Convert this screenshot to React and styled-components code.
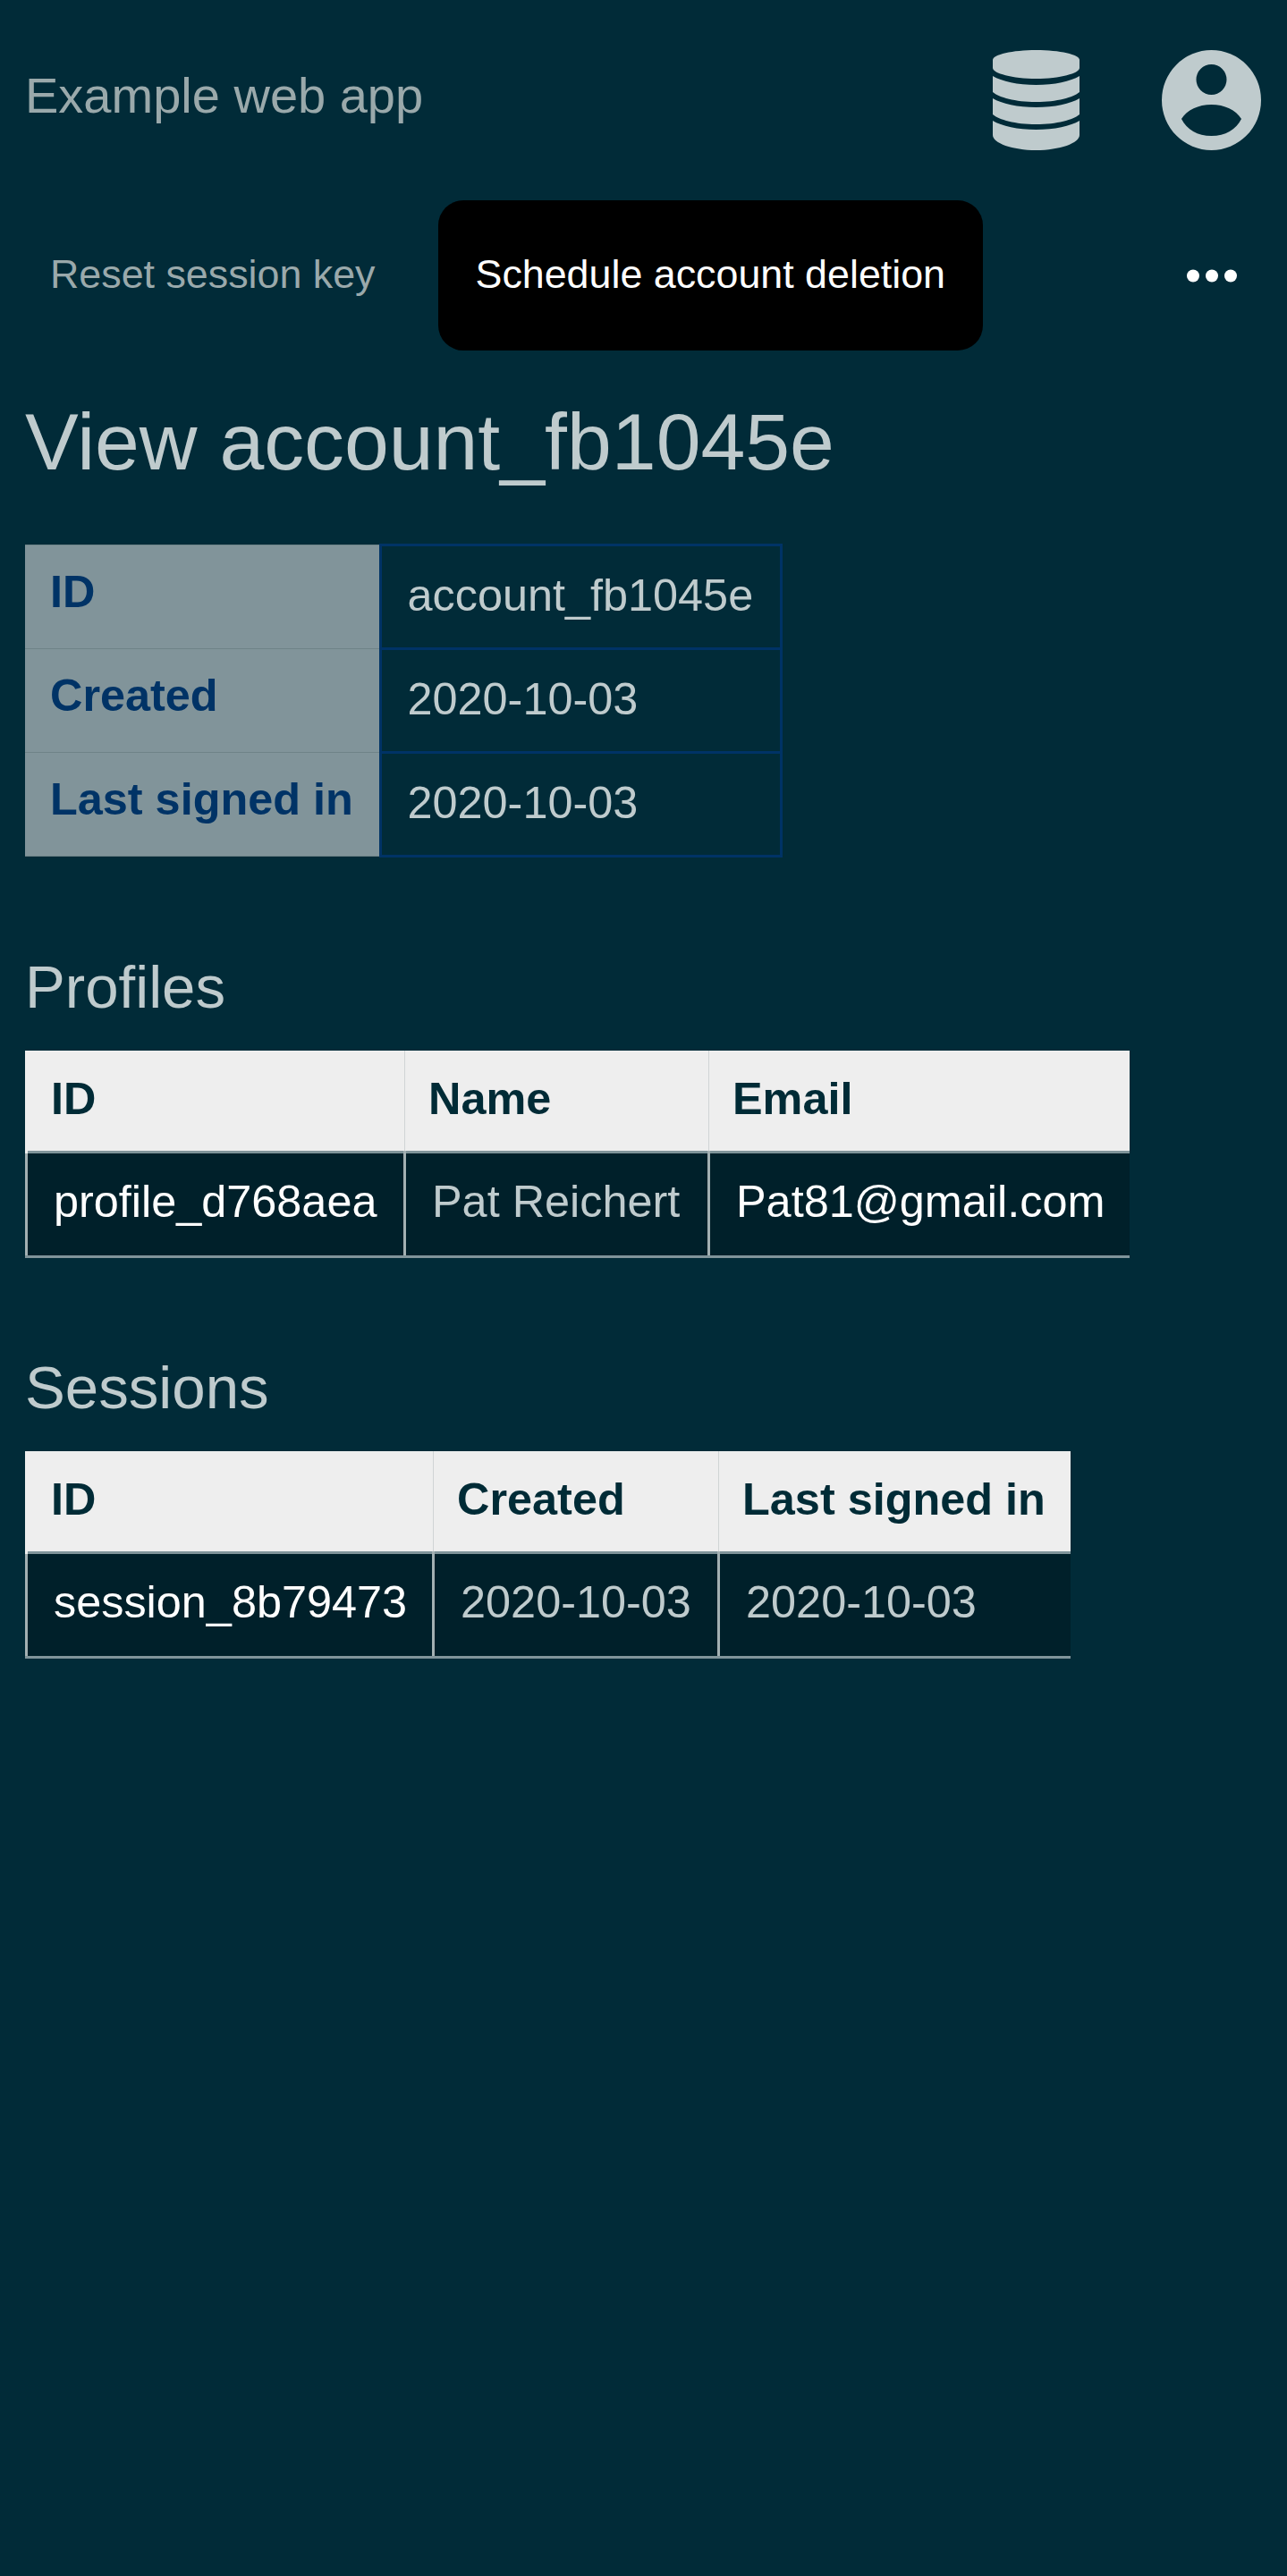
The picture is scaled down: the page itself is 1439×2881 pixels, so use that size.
import React from 'react';
import styled, { createGlobalStyle } from 'styled-components';

const GlobalStyle = createGlobalStyle`
  html, body {
    margin: 0;
    background: #012b38;
  }
  body {
    min-height: 2881px;
    font-family: 'Liberation Sans', Arial, sans-serif;
    font-size: 50.4px;
    line-height: 57px;
    color: #bfcbcd;
  }
`;

function DatabaseIcon() {
  return (
    <svg width="97" height="112" viewBox="0 0 97 112" fill="#bfcbcd">
      <path d="M0 11C0 5 22 0 48.5 0S97 5 97 11V20C97 26 75 32 48.5 32S0 26 0 20Z" />
      <path d="M0 29C10 35 28 39 48.5 39S87 35 97 29V47C90 53 72 58 48.5 58S7 53 0 47Z" />
      <path d="M0 54C10 60 28 64 48.5 64S87 60 97 54V72C90 78 72 83 48.5 83S7 78 0 72Z" />
      <path d="M0 79C10 85 28 89 48.5 89S87 85 97 79V95C97 104 75 112 48.5 112S0 104 0 95Z" />
    </svg>
  );
}

function AvatarIcon() {
  return (
    <svg width="111" height="112" viewBox="0 0 111 112" fill="#bfcbcd" fillRule="evenodd">
      <path d="M55.5 0A55.5 56 0 1 1 55.5 112A55.5 56 0 1 1 55.5 0ZM55.5 16A17 17 0 1 0 55.5 50A17 17 0 1 0 55.5 16ZM22 77C28 67 41 61 55.5 61S83 67 89 77C83 89 71 96 55.5 96S28 89 22 77Z" />
    </svg>
  );
}

function DotsIcon() {
  return (
    <svg width="56" height="15" viewBox="0 0 56 15" fill="#fff">
      <circle cx="7" cy="7.5" r="7" />
      <circle cx="28" cy="7.5" r="7" />
      <circle cx="49" cy="7.5" r="7" />
    </svg>
  );
}

export default function App() {
  return (
    <Page>
      <GlobalStyle />
      <Header>
        <AppTitle>Example web app</AppTitle>
        <HeaderIcons>
          <DatabaseIcon />
          <AvatarIcon />
        </HeaderIcons>
      </Header>

      <ActionBar>
        <ActionButton>Reset session key</ActionButton>
        <ActionButton $primary>Schedule account deletion</ActionButton>
        <MoreButton>
          <DotsIcon />
        </MoreButton>
      </ActionBar>

      <Content>
        <PageTitle>View account_fb1045e</PageTitle>

        <DetailTable>
          <colgroup>
            <Column $width={397} />
            <Column $width={448} />
          </colgroup>
          <tbody>
            <tr>
              <th>ID</th>
              <td>account_fb1045e</td>
            </tr>
            <tr>
              <th>Created</th>
              <td>2020-10-03</td>
            </tr>
            <tr>
              <th>Last signed in</th>
              <td>2020-10-03</td>
            </tr>
          </tbody>
        </DetailTable>

        <SectionTitle>Profiles</SectionTitle>
        <ListTable>
          <colgroup>
            <Column $width={423} />
            <Column $width={340} />
            <Column $width={470} />
          </colgroup>
          <thead>
            <tr>
              <th>ID</th>
              <th>Name</th>
              <th>Email</th>
            </tr>
          </thead>
          <tbody>
            <tr>
              <LinkCell>profile_d768aea</LinkCell>
              <td>Pat Reichert</td>
              <LinkCell>Pat81@gmail.com</LinkCell>
            </tr>
          </tbody>
        </ListTable>

        <SectionTitle>Sessions</SectionTitle>
        <ListTable>
          <colgroup>
            <Column $width={455} />
            <Column $width={319} />
            <Column $width={393} />
          </colgroup>
          <thead>
            <tr>
              <th>ID</th>
              <th>Created</th>
              <th>Last signed in</th>
            </tr>
          </thead>
          <tbody>
            <tr>
              <LinkCell>session_8b79473</LinkCell>
              <td>2020-10-03</td>
              <td>2020-10-03</td>
            </tr>
          </tbody>
        </ListTable>
      </Content>
    </Page>
  );
}

const Page = styled.div`
  width: 1439px;
`;

const Header = styled.header`
  display: flex;
  justify-content: space-between;
  align-items: center;
  padding: 56px 29px 56px 28px;
`;

const AppTitle = styled.div`
  padding-bottom: 10px;
  font-size: 56px;
  line-height: 64px;
  color: #9aa9ab;
`;

const HeaderIcons = styled.div`
  display: flex;
  align-items: center;
  gap: 92px;
`;

const ActionBar = styled.nav`
  display: flex;
  align-items: center;
  gap: 28px;
  padding: 0 14px;
`;

const ActionButton = styled.div`
  box-sizing: border-box;
  display: flex;
  align-items: center;
  height: 168px;
  padding: 0 42px 3px;
  border-radius: 28px;
  font-size: 44.8px;
  color: ${(p) => (p.$primary ? '#fff' : '#9aa9ab')};
  background: ${(p) => (p.$primary ? '#000' : 'transparent')};
`;

const MoreButton = styled.div`
  margin-left: auto;
  margin-right: 42px;
  display: flex;
`;

const Content = styled.main`
  padding: 0 28px;
`;

const PageTitle = styled.h1`
  margin: 51px 0 62px;
  font-size: 89.6px;
  font-weight: 400;
  line-height: 103px;
`;

const SectionTitle = styled.h2`
  margin: 106px 0 33px;
  font-size: 67.2px;
  font-weight: 400;
  line-height: 77px;
`;

const Column = styled.col`
  width: ${(p) => p.$width}px;
`;

const DetailTable = styled.table`
  border-collapse: collapse;
  margin-bottom: 4px;

  th,
  td {
    padding: 26px 28px 30px;
    text-align: left;
    white-space: nowrap;
  }

  th {
    padding-top: 22px;
    padding-bottom: 34px;
    background: #81949a;
    color: #003366;
    border: 1px solid #6f8388;
    border-left: 0;
  }

  td {
    padding-left: 29px;
    border: 3px solid #003366;
  }
`;

const ListTable = styled.table`
  border-collapse: collapse;

  th,
  td {
    padding: 25px 28px 32px;
    text-align: left;
    white-space: nowrap;
  }

  th {
    padding-left: 26px;
    padding-bottom: 30px;
    background: #eee;
    color: #002b36;
    border: 1px solid #d0d4d5;
    border-top: 0;
    border-bottom: 0;
  }

  th:first-child {
    border-left: 3px solid #eee;
    border-right: 0;
  }

  th:last-child {
    border-right: 0;
  }

  td {
    padding-left: 29px;
    background: #00202a;
    border: 3px solid #a3b0b2;
    border-top-color: #80949a;
    border-bottom-color: #80949a;
  }

  td:last-child {
    border-right: 0;
  }
`;

const LinkCell = styled.td`
  color: #fff;
`;
